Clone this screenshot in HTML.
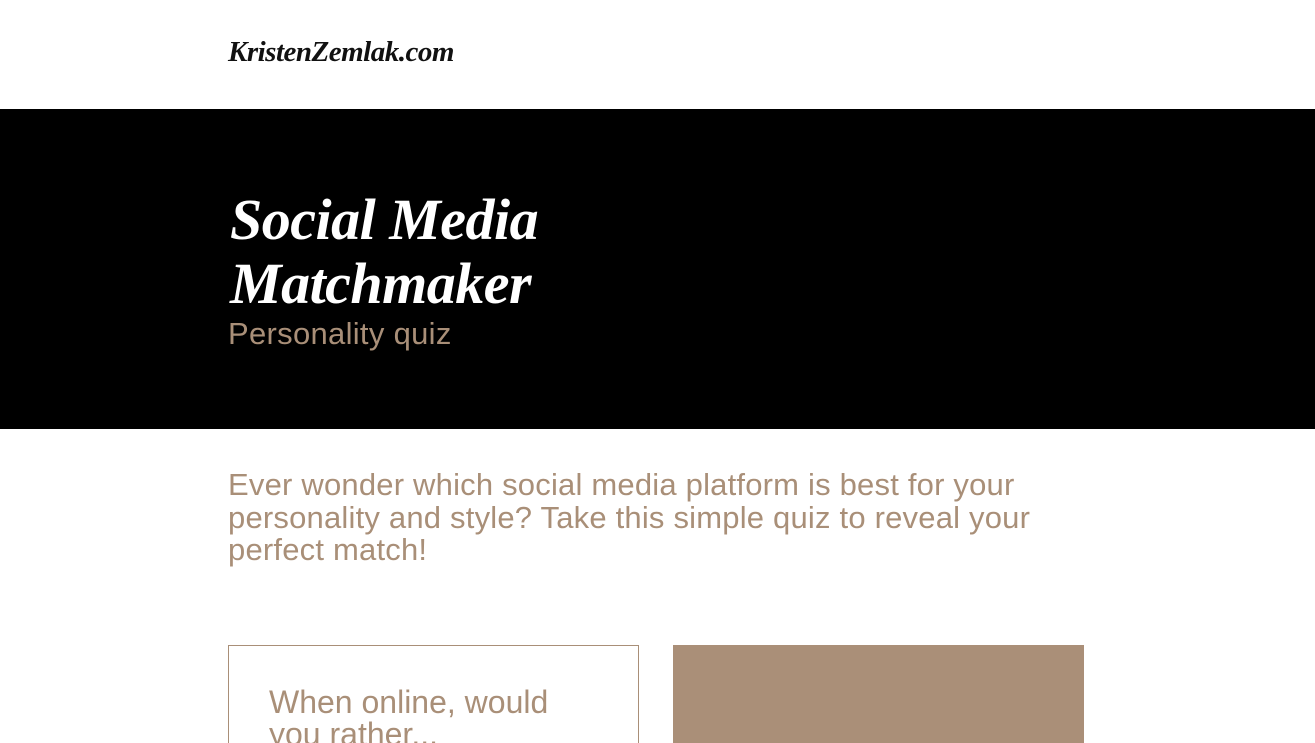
<!DOCTYPE html>
<html style="overflow:hidden;height:743px"><head><style>
body{margin:0;width:1315px;height:743px;overflow:hidden;background:#fff;font-family:"Liberation Sans",sans-serif;position:relative}
.logo{position:absolute;left:228px;top:36px;font-family:"Liberation Serif",serif;font-style:italic;font-weight:bold;font-size:29px;color:#111;letter-spacing:-0.5px}
.band{position:absolute;left:0;top:109px;width:1315px;height:320px;background:#000}
.title{position:absolute;left:230px;top:188px;font-family:"Liberation Serif",serif;font-style:italic;font-weight:bold;font-size:58px;line-height:64px;color:#fff;letter-spacing:-0.5px}
.sub{position:absolute;left:228px;top:316px;font-size:31px;color:#a98f78;letter-spacing:0.3px}
.intro{position:absolute;left:228px;top:469px;width:880px;font-size:31px;line-height:32.5px;color:#a98f78;letter-spacing:0.2px}
.card{position:absolute;left:228px;top:645px;width:409px;height:120px;border:1px solid #a98f78}
.card div{position:absolute;left:40px;top:40px;font-size:32px;line-height:32px;color:#a98f78;width:300px}
.box{position:absolute;left:673px;top:645px;width:411px;height:98px;background:#aa8f78}
</style></head><body>
<div class="logo">KristenZemlak.com</div>
<div class="band"></div>
<div class="title">Social Media<br>Matchmaker</div>
<div class="sub">Personality quiz</div>
<div class="intro">Ever wonder which social media platform is best for your personality and style? Take this simple quiz to reveal your perfect match!</div>
<div class="card"><div>When online, would you rather...</div></div>
<div class="box"></div>
</body></html>
